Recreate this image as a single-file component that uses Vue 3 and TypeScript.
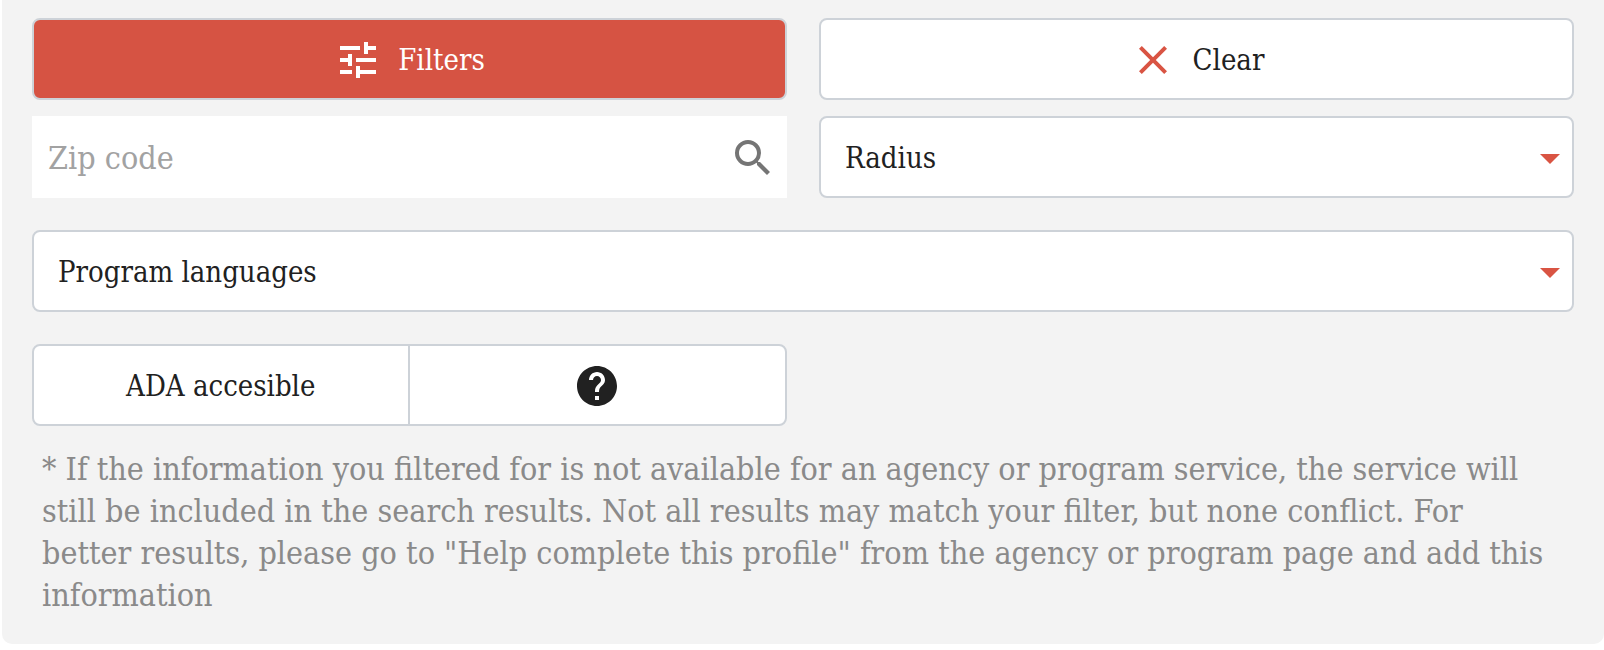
<script setup lang="ts">
import { ref } from 'vue'

const radiusOptions: string[] = ['Radius']
const languageOptions: string[] = ['Program languages']

const zip = ref('')
const radius = ref(radiusOptions[0])
const language = ref(languageOptions[0])
const adaOnly = ref(false)

function clearFilters(): void {
  zip.value = ''
  radius.value = radiusOptions[0]
  language.value = languageOptions[0]
  adaOnly.value = false
}
</script>

<template>
  <form class="panel" @submit.prevent>
    <div class="grid">
      <button type="button" class="box action primary">
        <svg class="icon" viewBox="0 0 24 24" aria-hidden="true">
          <path d="M3 17v2h6v-2H3zM3 5v2h10V5H3zm10 16v-2h8v-2h-8v-2h-2v6h2zM7 9v2H3v2h4v2h2V9H7zm14 4v-2H11v2h10zm-6-4h2V7h4V5h-4V3h-2v6z" />
        </svg>
        <span>Filters</span>
      </button>
      <button type="button" class="box action" @click="clearFilters">
        <svg class="icon accent" viewBox="0 0 24 24" aria-hidden="true">
          <path d="M19 6.41L17.59 5 12 10.59 6.41 5 5 6.41 10.59 12 5 17.59 6.41 19 12 13.41 17.59 19 19 17.59 13.41 12z" />
        </svg>
        <span>Clear</span>
      </button>
      <div class="zip">
        <input v-model="zip" type="text" placeholder="Zip code" aria-label="Zip code" />
        <button type="submit" class="search" aria-label="Search">
          <svg class="icon" viewBox="0 0 24 24" aria-hidden="true">
            <path d="M15.5 14h-.79l-.28-.27A6.47 6.47 0 0 0 16 9.5 6.5 6.5 0 1 0 9.5 16c1.61 0 3.09-.59 4.23-1.57l.27.28v.79l5 4.99L20.49 19l-4.99-5zm-6 0C7.01 14 5 11.99 5 9.5S7.01 5 9.5 5 14 7.01 14 9.5 11.99 14 9.5 14z" />
          </svg>
        </button>
      </div>
      <div class="picker">
        <select v-model="radius" class="box" aria-label="Radius">
          <option v-for="o in radiusOptions" :key="o">{{ o }}</option>
        </select>
        <svg class="icon accent" viewBox="0 0 24 24" aria-hidden="true"><path d="M7 10l5 5 5-5z" /></svg>
      </div>
    </div>

    <div class="picker">
      <select v-model="language" class="box" aria-label="Program languages">
        <option v-for="o in languageOptions" :key="o">{{ o }}</option>
      </select>
      <svg class="icon accent" viewBox="0 0 24 24" aria-hidden="true"><path d="M7 10l5 5 5-5z" /></svg>
    </div>

    <div class="grid">
      <div class="box group">
        <button type="button" :aria-pressed="adaOnly" @click="adaOnly = !adaOnly">ADA accesible</button>
        <button type="button" aria-label="Help">
          <svg class="icon" viewBox="0 0 24 24" aria-hidden="true">
            <path d="M12 2C6.48 2 2 6.48 2 12s4.48 10 10 10 10-4.48 10-10S17.52 2 12 2zm1 17h-2v-2h2v2zm2.07-7.75l-.9.92C13.45 12.9 13 13.5 13 15h-2v-.5c0-1.1.45-2.1 1.17-2.83l1.24-1.26c.37-.36.59-.86.59-1.41 0-1.1-.9-2-2-2s-2 .9-2 2H8c0-2.21 1.79-4 4-4s4 1.79 4 4c0 .88-.36 1.68-.93 2.25z" />
          </svg>
        </button>
      </div>
    </div>

    <p class="note">
      * If the information you filtered for is not available for an agency or program service, the
      service will still be included in the search results. Not all results may match your filter,
      but none conflict. For better results, please go to "Help complete this profile" from the
      agency or program page and add this information
    </p>
  </form>
</template>

<style>
body {
  background: #fff;
}
</style>

<style scoped>
.panel {
  display: flex;
  flex-direction: column;
  gap: 32px;
  margin-left: 2px;
  padding: 18px 30px 28px;
  border-radius: 0 0 10px 10px;
  background: #f3f3f3;
  color: #212121;
  font-family: "Roboto Slab", "DejaVu Serif Condensed", "DejaVu Serif", serif;
  font-size: 29px;
}

.grid {
  display: grid;
  grid-template-columns: 1fr 1fr;
  gap: 16px 32px;
}

button,
input,
select {
  box-sizing: border-box;
  margin: 0;
  padding: 0;
  border: 0;
  background: none;
  color: inherit;
  font: inherit;
}

button {
  cursor: pointer;
}

.box {
  height: 82px;
  box-sizing: border-box;
  border: 2px solid #cdd2d8;
  border-radius: 8px;
  background: #fff;
}

.action {
  display: flex;
  align-items: center;
  justify-content: center;
  gap: 16px;
  padding-top: 2px;
}

.primary {
  background: #d65343;
  color: #fff;
}

.icon {
  display: block;
  flex: none;
  width: 48px;
  height: 48px;
  fill: currentColor;
}

.accent {
  color: #d95443;
}

.zip {
  display: flex;
  align-items: center;
  box-sizing: border-box;
  height: 82px;
  padding: 2px 10px 0 16px;
  background: #fff;
}

.zip input {
  flex: 1;
  min-width: 0;
  height: 100%;
  font-size: 32px;
  outline: none;
}

.zip input::placeholder {
  color: #a2a2a2;
  opacity: 1;
}

.search {
  color: #757575;
}

.picker {
  display: grid;
  align-items: center;
}

.picker > * {
  grid-area: 1 / 1;
}

.picker select {
  width: 100%;
  padding: 2px 48px 0 24px;
  appearance: none;
}

.picker .icon {
  justify-self: end;
  padding-top: 2px;
  pointer-events: none;
}

.group {
  display: grid;
  grid-template-columns: 1fr 1fr;
}

.group button {
  display: flex;
  align-items: center;
  justify-content: center;
  padding-top: 2px;
}

.group button:first-child {
  border-right: 2px solid #cdd2d8;
}

.note {
  margin: -10px 0 0;
  padding: 0 20px 0 10px;
  color: #8a8a8a;
  font-size: 32px;
  line-height: 42px;
}
</style>
